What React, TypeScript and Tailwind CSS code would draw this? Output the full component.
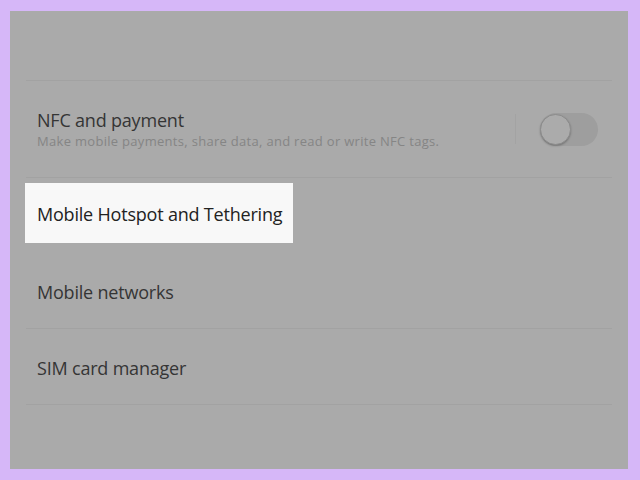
import React from 'react';

const rows = ['Mobile networks', 'SIM card manager'];

export default function App() {
  return (
    <div className="h-[480px] w-[640px] bg-[#d6b7f8] pt-[11px] pl-[10px]" style={{ fontFamily: '"Open Sans", "Noto Sans", sans-serif' }}>
      <div className="w-[618px] h-[458px] bg-[#aaaaaa] pt-[69px] px-[16px]">
        {/* NFC row */}
        <div className="h-[97px] border-t border-[#a2a2a2] flex items-center pl-[11px] pr-[14px]">
          <div className="flex-1 flex flex-col pt-[1px]">
            <span className="text-[18px] leading-[24px] text-[#353535] tracking-[-0.2px]">NFC and payment</span>
            <span className="text-[13px] leading-[19px] text-[#858585] tracking-[0.3px]">
              Make mobile payments, share data, and read or write NFC tags.
            </span>
          </div>
          <div className="w-px h-[30px] bg-[#a3a3a3] mr-[24px]" />
          <div className="relative w-[58px] h-[33px] rounded-full bg-[#9e9e9e]">
            <div className="absolute left-0 top-[1px] w-[31px] h-[31px] rounded-full bg-[#ababab] border border-[#8c8c8c] shadow-[0_1px_2px_rgba(0,0,0,0.25)]" />
          </div>
        </div>

        {/* Highlighted row */}
        <div className="h-[76px] border-t border-[#a2a2a2] pt-[5px]">
          <div className="ml-[-1px] w-[268px] h-[60px] bg-[#f8f8f8] flex items-center pl-[12px] pt-[3px]">
            <span className="text-[18px] text-[#222222] tracking-[-0.2px]">Mobile Hotspot and Tethering</span>
          </div>
        </div>

        {rows.map((r) => (
          <div key={r} className="h-[76px] border-b border-[#a2a2a2] flex items-center pl-[11px] pt-[3px]">
            <span className="text-[18px] text-[#353535] tracking-[-0.2px]">{r}</span>
          </div>
        ))}
      </div>
    </div>
  );
}
